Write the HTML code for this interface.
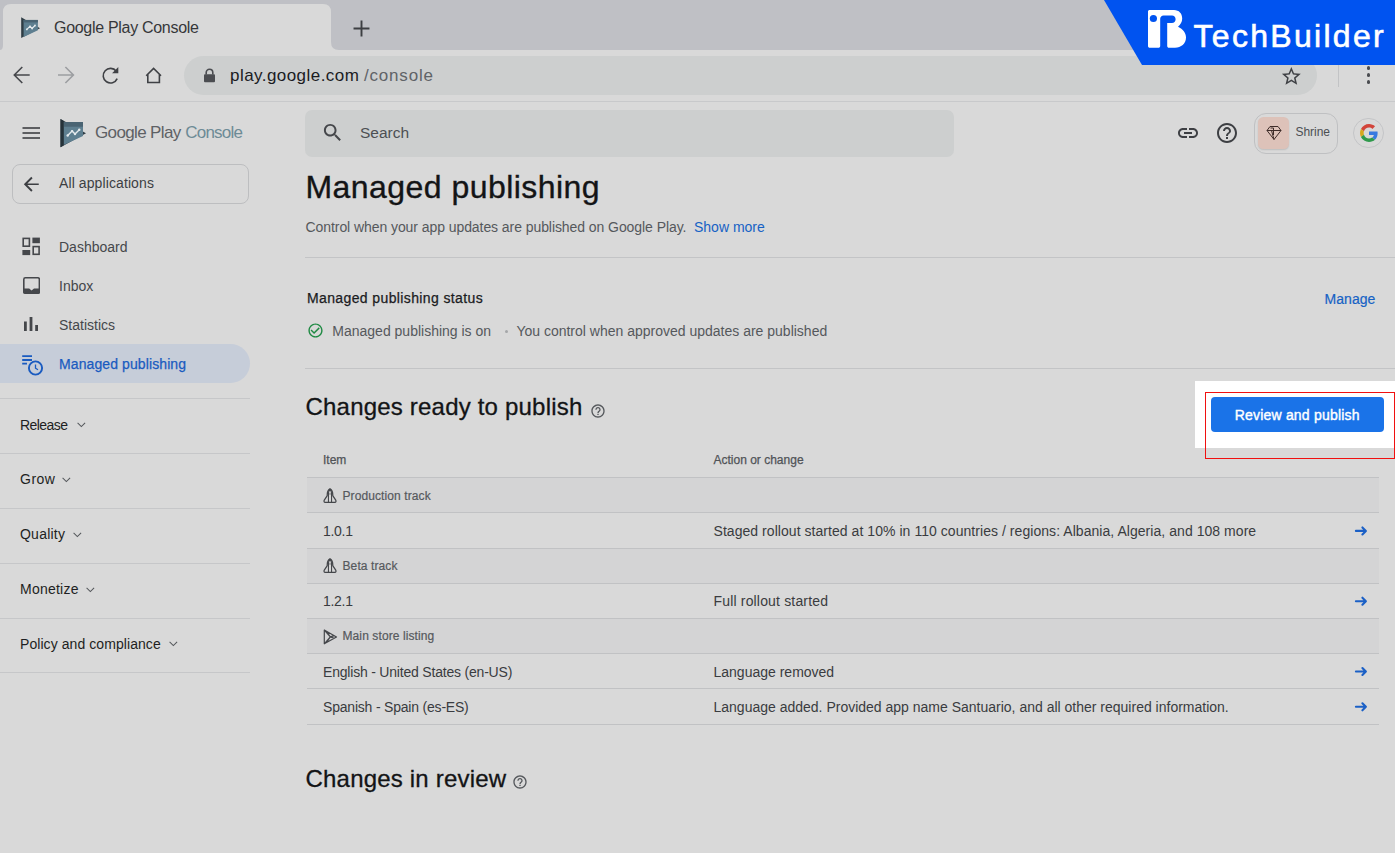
<!DOCTYPE html>
<html><head><meta charset="utf-8"><title>Managed publishing</title>
<style>
html,body{margin:0;padding:0;}
body{width:1395px;height:853px;position:relative;overflow:hidden;background:#d9d9d9;font-family:"Liberation Sans",sans-serif;}
.t{position:absolute;white-space:nowrap;line-height:1;}
.r{position:absolute;}
</style></head><body>
<div class="r" style="left:0px;top:0px;width:1395px;height:50px;background:#bfc0c5;"></div>
<svg class="r" style="left:0;top:0" width="360" height="52" viewBox="0 0 360 52"><path d="M0 50 Q3 50 3 45 L3 12 Q3 4 11 4 L323 4 Q331 4 331 12 L331 42 Q331 50 339 50 L0 50 Z" fill="#d9d9d9"/></svg>
<div class="r" style="left:0px;top:50px;width:1395px;height:51px;background:#d9d9d9;"></div>
<svg class="r" style="left:0;top:0" width="100" height="160" viewBox="0 0 100 160"><path d="M21.2 17.3 L21.2 38 L40 28.2 Z" fill="#2f3d45"/><path d="M23.6 19.9 H37.9 V30.2 L23.6 37 Z" fill="#5e7f90"/><path d="M23.6 19.9 H37.9 V22.4 H23.6 Z" fill="#4a6473"/><polyline points="26.8,29.4 30,26.4 32.1,28.5 35,25.5" fill="none" stroke="#e4eaed" stroke-width="1.2"/><circle cx="26.8" cy="29.4" r="0.9" fill="#e4eaed"/><circle cx="30" cy="26.4" r="0.9" fill="#e4eaed"/><circle cx="32.1" cy="28.5" r="0.9" fill="#e4eaed"/><circle cx="35" cy="25.5" r="0.9" fill="#e4eaed"/><path d="M60.5 119.1 L60.5 147.3 L86 133.2 Z" fill="#2f3d45"/><path d="M63.6 122 H83 V135.9 L63.6 145 Z" fill="#5e7f90"/><path d="M63.6 122 H83 V126.7 H63.6 Z" fill="#4a6473"/><path d="M60.5 119.1 L60.5 147.3 L63.6 145.6 L63.6 121 Z" fill="#26333a"/><polyline points="67.7,135.5 72.1,131.1 75,134 79.3,129.8" fill="none" stroke="#e4eaed" stroke-width="1.4"/><circle cx="67.7" cy="135.5" r="1.2" fill="#e4eaed"/><circle cx="72.1" cy="131.1" r="1.2" fill="#e4eaed"/><circle cx="75" cy="134" r="1.2" fill="#e4eaed"/><circle cx="79.3" cy="129.8" r="1.2" fill="#e4eaed"/></svg>
<div class="t" style="left:54px;top:20.06px;font-size:16px;color:#36373a;letter-spacing:-0.3px;">Google Play Console</div>
<svg class="r" style="left:353px;top:20px;" width="17" height="17" viewBox="0 0 16 16"><path d="M8 0.5 V15.5 M0.5 8 H15.5" stroke="#3d3f43" stroke-width="1.8"/></svg>
<svg class="r" style="left:0;top:0" width="180" height="100" viewBox="0 0 180 100"><path d="M29.7 75 H15 M22.3 67 L14.3 75 L22.3 83" fill="none" stroke="#45474b" stroke-width="1.6"/><path d="M58 75 H72.7 M65.4 67 L73.4 75 L65.4 83" fill="none" stroke="#9c9ea1" stroke-width="1.6"/><path d="M116.3 71.2 A7.3 7.3 0 1 0 117.2 78.6" fill="none" stroke="#3f4145" stroke-width="1.6"/><path d="M118.3 67 V73.2 H112.1 Z" fill="#3f4145"/><path d="M146.2 75.8 L153.6 68.4 L161 75.8 M147.8 74.5 V82.5 H159.4 V74.5" fill="none" stroke="#3f4145" stroke-width="1.6" stroke-linejoin="miter"/></svg>
<div class="r" style="left:184px;top:56px;width:1133px;height:39px;background:#cdcfcf;border-radius:19.5px;"></div>
<svg class="r" style="left:203px;top:68px;" width="13" height="15" viewBox="0 0 13 15"><path d="M3.2 6.5 V4.6 A3.3 3.3 0 0 1 9.8 4.6 V6.5" fill="none" stroke="#4b4d51" stroke-width="1.6"/><rect x="1" y="6.3" width="11" height="8" rx="1" fill="#4b4d51"/></svg>
<div class="t" style="left:230px;top:66.81px;font-size:17px;color:#1b1c1f;letter-spacing:0.45px;">play.google.com</div>
<div class="t" style="left:364px;top:66.81px;font-size:17px;color:#606367;letter-spacing:0.8px;">/console</div>
<svg class="r" style="left:1279.9px;top:65.1px;" width="22.7" height="22.7" viewBox="0 0 24 24"><path d="M22 9.24l-7.19-.62L12 2 9.19 8.63 2 9.24l5.46 4.73L5.82 21 12 17.27 18.18 21l-1.63-7.03L22 9.24zM12 15.4l-3.76 2.27 1-4.28-3.32-2.88 4.38-.38L12 6.1l1.71 4.04 4.38.38-3.32 2.88 1 4.28L12 15.4z" fill="#3f4145"/></svg>
<div class="r" style="left:1338px;top:65px;width:1px;height:22px;background:#c2c3c5;"></div>
<div class="r" style="left:1366.5px;top:66.3px;width:3.6px;height:3.6px;background:#4a4c50;border-radius:50%;"></div>
<div class="r" style="left:1366.5px;top:73.3px;width:3.6px;height:3.6px;background:#4a4c50;border-radius:50%;"></div>
<div class="r" style="left:1366.5px;top:80.3px;width:3.6px;height:3.6px;background:#4a4c50;border-radius:50%;"></div>
<div class="r" style="left:0px;top:101px;width:1395px;height:1px;background:#c8c9cb;"></div>
<svg class="r" style="left:21px;top:126px;" width="20" height="14" viewBox="0 0 20 14"><path d="M1.5 2.1 H19 M1.5 7 H19 M1.5 11.9 H19" stroke="#34363a" stroke-width="1.5"/></svg>
<div class="t" style="left:95px;top:123.91px;font-size:17px;color:#5e6165;letter-spacing:-0.64px;">Google Play</div>
<div class="t" style="left:185.2px;top:123.91px;font-size:17px;color:#6d8b96;letter-spacing:-0.75px;">Console</div>
<div class="r" style="left:12px;top:164.4px;width:235px;height:37.4px;background:transparent;border:1px solid #bdbec0;border-radius:8px;"></div>
<svg class="r" style="left:20px;top:173.1px;" width="22.5" height="22.5" viewBox="0 0 24 24"><path d="M20 11.1H7.83l5.59-5.59L12 4.1l-7.9 7.9 7.9 7.9 1.41-1.41L7.83 12.9H20v-1.8z" fill="#3d3f43"/></svg>
<div class="t" style="left:59px;top:175.95px;font-size:14px;color:#3d3f43;letter-spacing:0.1px;">All applications</div>
<svg class="r" style="left:22px;top:237px;" width="18" height="19" viewBox="0 0 18 19"><rect x="1.2" y="1.4" width="6.2" height="7.8" fill="none" stroke="#45474b" stroke-width="1.6"/><rect x="10.4" y="0.6" width="7.5" height="5.6" fill="#45474b"/><rect x="0.4" y="13" width="7.8" height="5.1" fill="#45474b"/><rect x="11.2" y="9.6" width="5.9" height="7.7" fill="none" stroke="#45474b" stroke-width="1.6"/></svg>
<div class="t" style="left:59px;top:239.65px;font-size:14px;color:#45474b;">Dashboard</div>
<svg class="r" style="left:22.8px;top:277.1px;" width="17.2" height="17" viewBox="0 0 17.2 17"><rect x="0.8" y="0.8" width="15.6" height="15.2" rx="1.6" fill="none" stroke="#45474b" stroke-width="1.6"/><path d="M0 11.4 H6.2 L8.6 13.4 L11 11.4 H17.2 V15 A2 2 0 0 1 15.2 17 H2 A2 2 0 0 1 0 15 Z" fill="#45474b"/></svg>
<div class="t" style="left:59px;top:278.95px;font-size:14px;color:#45474b;">Inbox</div>
<svg class="r" style="left:24px;top:317.2px;" width="14" height="14" viewBox="0 0 14 14"><rect x="0" y="4.5" width="2.8" height="9.5" fill="#45474b"/><rect x="5.6" y="0" width="2.8" height="14" fill="#45474b"/><rect x="11.2" y="8" width="2.8" height="6" fill="#45474b"/></svg>
<div class="t" style="left:59px;top:317.65px;font-size:14px;color:#45474b;">Statistics</div>
<div class="r" style="left:0px;top:344.2px;width:250px;height:39.2px;background:#c6cdd9;border-radius:0 19.6px 19.6px 0;"></div>
<svg class="r" style="left:22px;top:355px;" width="22" height="21" viewBox="0 0 22 21"><path d="M0.2 1.2 H10 M0.2 5 H10 M0.2 8.7 H5" stroke="#1a5bc0" stroke-width="1.8"/><circle cx="13.5" cy="13" r="6.6" fill="none" stroke="#1a5bc0" stroke-width="1.9"/><path d="M13.5 9.5 V13.2 L16 14.8" fill="none" stroke="#1a5bc0" stroke-width="1.3"/></svg>
<div class="t" style="left:59px;top:357.35px;font-size:14px;color:#1a5bc0;letter-spacing:0.1px;-webkit-text-stroke:0.25px #1a5bc0;">Managed publishing</div>
<div class="r" style="left:0px;top:398px;width:250px;height:1px;background:#c6c7c9;"></div>
<div class="r" style="left:0px;top:453px;width:250px;height:1px;background:#c6c7c9;"></div>
<div class="r" style="left:0px;top:508px;width:250px;height:1px;background:#c6c7c9;"></div>
<div class="r" style="left:0px;top:563px;width:250px;height:1px;background:#c6c7c9;"></div>
<div class="r" style="left:0px;top:618px;width:250px;height:1px;background:#c6c7c9;"></div>
<div class="r" style="left:0px;top:672px;width:250px;height:1px;background:#c6c7c9;"></div>
<div class="t" style="left:20px;top:417.55px;font-size:14px;color:#1e1f22;letter-spacing:-0.55px;">Release</div>
<div class="t" style="left:20px;top:472.30px;font-size:14px;color:#1e1f22;letter-spacing:0.5px;">Grow</div>
<div class="t" style="left:20px;top:527.05px;font-size:14px;color:#1e1f22;letter-spacing:0.23px;">Quality</div>
<div class="t" style="left:20px;top:581.80px;font-size:14px;color:#1e1f22;letter-spacing:0.24px;">Monetize</div>
<div class="t" style="left:20px;top:636.55px;font-size:14px;color:#1e1f22;letter-spacing:0.07px;">Policy and compliance</div>
<svg class="r" style="left:76.6px;top:422.30px" width="9" height="6" viewBox="0 0 9 6"><path d="M0.6 0.8 L4.35 4.5 L8.1 0.8" fill="none" stroke="#55585c" stroke-width="1.05"/></svg>
<svg class="r" style="left:62px;top:477.05px" width="9" height="6" viewBox="0 0 9 6"><path d="M0.6 0.8 L4.35 4.5 L8.1 0.8" fill="none" stroke="#55585c" stroke-width="1.05"/></svg>
<svg class="r" style="left:73.3px;top:531.80px" width="9" height="6" viewBox="0 0 9 6"><path d="M0.6 0.8 L4.35 4.5 L8.1 0.8" fill="none" stroke="#55585c" stroke-width="1.05"/></svg>
<svg class="r" style="left:86.3px;top:586.55px" width="9" height="6" viewBox="0 0 9 6"><path d="M0.6 0.8 L4.35 4.5 L8.1 0.8" fill="none" stroke="#55585c" stroke-width="1.05"/></svg>
<svg class="r" style="left:168.9px;top:641.30px" width="9" height="6" viewBox="0 0 9 6"><path d="M0.6 0.8 L4.35 4.5 L8.1 0.8" fill="none" stroke="#55585c" stroke-width="1.05"/></svg>

<div class="r" style="left:305px;top:110px;width:649px;height:46.5px;background:#cdcfcf;border-radius:7px;"></div>
<svg class="r" style="left:320.5px;top:121px;" width="23.3" height="23.3" viewBox="0 0 24 24"><path d="M15.5 14h-.79l-.28-.27C15.41 12.59 16 11.11 16 9.5 16 5.91 13.09 3 9.5 3S3 5.91 3 9.5 5.91 16 9.5 16c1.61 0 3.09-.59 4.23-1.57l.27.28v.79l5 4.99L20.49 19l-4.99-5zm-6 0C7.01 14 5 11.99 5 9.5S7.01 5 9.5 5 14 7.01 14 9.5 11.99 14 9.5 14z" fill="#45474b"/></svg>
<div class="t" style="left:360px;top:124.68px;font-size:15.5px;color:#4c4f53;">Search</div>
<svg class="r" style="left:1176px;top:121px;" width="24" height="24" viewBox="0 0 24 24"><path d="M3.9 12c0-1.71 1.39-3.1 3.1-3.1h4V7H7c-2.76 0-5 2.24-5 5s2.24 5 5 5h4v-1.9H7c-1.71 0-3.1-1.39-3.1-3.1zM8 13h8v-2H8v2zm9-6h-4v1.9h4c1.71 0 3.1 1.39 3.1 3.1s-1.39 3.1-3.1 3.1h-4V17h4c2.76 0 5-2.24 5-5s-2.24-5-5-5z" fill="#3d3f43"/></svg>
<svg class="r" style="left:1215px;top:121px;" width="24" height="24" viewBox="0 0 24 24"><path d="M11 18h2v-2h-2v2zm1-16C6.48 2 2 6.48 2 12s4.48 10 10 10 10-4.48 10-10S17.52 2 12 2zm0 18c-4.41 0-8-3.59-8-8s3.59-8 8-8 8 3.59 8 8-3.59 8-8 8zm0-14c-2.21 0-4 1.79-4 4h2c0-1.1.9-2 2-2s2 .9 2 2c0 2-3 1.75-3 5h2c0-2.25 3-2.5 3-5 0-2.21-1.79-4-4-4z" fill="#3d3f43"/></svg>
<div class="r" style="left:1254px;top:113px;width:82.2px;height:38.8px;background:transparent;border:1px solid #bfc0c2;border-radius:12px;"></div>
<div class="r" style="left:1258.3px;top:117.3px;width:31.2px;height:31.6px;background:#ddc2b9;border-radius:5.5px;box-shadow:0 1px 1.5px rgba(0,0,0,0.12);"></div>
<svg class="r" style="left:1266px;top:125px;" width="16" height="16" viewBox="0 0 16 16"><path d="M4 1.5 H12 L15 5.5 L8 14.5 L1 5.5 Z M1 5.5 H15 M5.5 5.5 L8 14.5 M4.5 3 L7.5 3 L7.5 10" fill="none" stroke="#3e2c29" stroke-width="1.0" stroke-linejoin="round"/></svg>
<div class="t" style="left:1295.5px;top:126.14px;font-size:12px;color:#4c4f53;letter-spacing:-0.05px;">Shrine</div>
<div class="r" style="left:1353.2px;top:117.6px;width:30.8px;height:30.8px;background:transparent;border:1px solid #c4c5c7;border-radius:50%;box-sizing:border-box;"></div>
<svg class="r" style="left:1359.5px;top:124px;" width="18" height="18" viewBox="0 0 48 48"><path fill="#d2443a" d="M24 9.5c3.54 0 6.71 1.22 9.21 3.6l6.85-6.85C35.9 2.38 30.47 0 24 0 14.62 0 6.51 5.38 2.56 13.22l7.98 6.19C12.43 13.72 17.74 9.5 24 9.5z"/><path fill="#3a7ae0" d="M46.98 24.55c0-1.57-.15-3.09-.38-4.55H24v9.02h12.94c-.58 2.96-2.26 5.48-4.78 7.18l7.73 6c4.51-4.18 7.09-10.36 7.09-17.65z"/><path fill="#d7a81f" d="M10.53 28.59c-.48-1.45-.76-2.99-.76-4.59s.27-3.14.76-4.59l-7.98-6.19C.92 16.46 0 20.12 0 24c0 3.88.92 7.54 2.56 10.78l7.97-6.19z"/><path fill="#2f9a4c" d="M24 48c6.48 0 11.93-2.13 15.89-5.81l-7.73-6c-2.15 1.45-4.92 2.3-8.16 2.3-6.26 0-11.57-4.22-13.47-9.91l-7.98 6.19C6.51 42.62 14.62 48 24 48z"/></svg>
<div class="t" style="left:305.5px;top:171.41px;font-size:32px;color:#131416;letter-spacing:0.45px;-webkit-text-stroke:0.35px #131416;">Managed publishing</div>
<div class="t" style="left:305.5px;top:220.35px;font-size:14px;color:#55585c;letter-spacing:-0.07px;">Control when your app updates are published on Google Play.</div>
<div class="t" style="left:694px;top:220.35px;font-size:14px;color:#1662c5;">Show more</div>
<div class="r" style="left:305px;top:257px;width:1090px;height:1px;background:#c3c4c6;"></div>
<div class="t" style="left:307px;top:290.55px;font-size:14px;color:#1b1c1f;letter-spacing:0.38px;-webkit-text-stroke:0.25px #1b1c1f;">Managed publishing status</div>
<svg class="r" style="left:307px;top:322px;" width="17" height="17" viewBox="0 0 24 24"><path d="M16.59 7.58L10 14.17l-3.59-3.58L5 12l5 5 8-8zM12 2C6.48 2 2 6.48 2 12s4.48 10 10 10 10-4.48 10-10S17.52 2 12 2zm0 18c-4.42 0-8-3.58-8-8s3.58-8 8-8 8 3.58 8 8-3.58 8-8 8z" fill="#1f8a43"/></svg>
<div class="t" style="left:332.3px;top:323.65px;font-size:14px;color:#55585c;">Managed publishing is on</div>
<div class="r" style="left:504.7px;top:329.5px;width:3px;height:3px;background:#a5a7a9;border-radius:50%;"></div>
<div class="t" style="left:516.4px;top:323.65px;font-size:14px;color:#55585c;">You control when approved updates are published</div>
<div class="t" style="left:1324.5px;top:292.45px;font-size:14px;color:#1662c5;letter-spacing:0.05px;-webkit-text-stroke:0.2px #1662c5;">Manage</div>
<div class="r" style="left:305px;top:368px;width:1090px;height:1px;background:#c3c4c6;"></div>
<div class="t" style="left:305.5px;top:394.88px;font-size:24px;color:#131416;letter-spacing:0.2px;-webkit-text-stroke:0.3px #131416;">Changes ready to publish</div>
<svg class="r" style="left:590px;top:403px;" width="16" height="16" viewBox="0 0 24 24"><path d="M11 18h2v-2h-2v2zm1-16C6.48 2 2 6.48 2 12s4.48 10 10 10 10-4.48 10-10S17.52 2 12 2zm0 18c-4.41 0-8-3.59-8-8s3.59-8 8-8 8 3.59 8 8-3.59 8-8 8zm0-14c-2.21 0-4 1.79-4 4h2c0-1.1.9-2 2-2s2 .9 2 2c0 2-3 1.75-3 5h2c0-2.25 3-2.5 3-5 0-2.21-1.79-4-4-4z" fill="#55585c"/></svg>
<div class="t" style="left:323px;top:454.34px;font-size:12px;color:#505357;-webkit-text-stroke:0.25px #505357;">Item</div>
<div class="t" style="left:713.5px;top:454.34px;font-size:12px;color:#505357;-webkit-text-stroke:0.25px #505357;">Action or change</div>
<div class="r" style="left:307px;top:477.5px;width:1071.5px;height:35.200000000000045px;background:#d4d4d5;"></div>
<div class="r" style="left:307px;top:548px;width:1071.5px;height:35.10000000000002px;background:#d4d4d5;"></div>
<div class="r" style="left:307px;top:618.2px;width:1071.5px;height:35.19999999999993px;background:#d4d4d5;"></div>
<div class="r" style="left:307px;top:477.0px;width:1071.5px;height:1px;background:#c1c2c4;"></div>
<div class="r" style="left:307px;top:512.2px;width:1071.5px;height:1px;background:#c1c2c4;"></div>
<div class="r" style="left:307px;top:547.5px;width:1071.5px;height:1px;background:#c1c2c4;"></div>
<div class="r" style="left:307px;top:582.6px;width:1071.5px;height:1px;background:#c1c2c4;"></div>
<div class="r" style="left:307px;top:617.7px;width:1071.5px;height:1px;background:#c1c2c4;"></div>
<div class="r" style="left:307px;top:652.9px;width:1071.5px;height:1px;background:#c1c2c4;"></div>
<div class="r" style="left:307px;top:688.2px;width:1071.5px;height:1px;background:#c1c2c4;"></div>
<div class="r" style="left:307px;top:723.6px;width:1071.5px;height:1px;background:#c1c2c4;"></div>
<svg class="r" style="left:322.5px;top:488px;" width="14" height="15" viewBox="0 0 13.5 15"><path d="M6.75 0.7 C5 1.8 4 3.8 4 6.4 V7.6 L1.2 11.8 C0.6 12.8 0.6 14.3 1.6 14.3 H11.9 C12.9 14.3 12.9 12.8 12.3 11.8 L9.5 7.6 V6.4 C9.5 3.8 8.5 1.8 6.75 0.7 Z" fill="none" stroke="#45474b" stroke-width="1.25" stroke-linejoin="round"/><path d="M5.2 14.3 V5.2 C5.2 3.6 5.8 2.6 6.75 2.1 C7.7 2.6 8.3 3.6 8.3 5.2 V14.3" fill="none" stroke="#45474b" stroke-width="1.1"/><circle cx="6.75" cy="5.9" r="0.7" fill="#45474b"/></svg>
<div class="t" style="left:342.5px;top:489.64px;font-size:12px;color:#56595d;letter-spacing:0.1px;-webkit-text-stroke:0.2px #56595d;">Production track</div>
<div class="t" style="left:323px;top:524.05px;font-size:14px;color:#3a3c40;letter-spacing:-0.3px;">1.0.1</div>
<div class="t" style="left:713.5px;top:524.05px;font-size:14px;color:#3a3c40;letter-spacing:0.05px;">Staged rollout started at 10% in 110 countries / regions: Albania, Algeria, and 108 more</div>
<svg class="r" style="left:322.5px;top:558.3px;" width="14" height="15" viewBox="0 0 13.5 15"><path d="M6.75 0.7 C5 1.8 4 3.8 4 6.4 V7.6 L1.2 11.8 C0.6 12.8 0.6 14.3 1.6 14.3 H11.9 C12.9 14.3 12.9 12.8 12.3 11.8 L9.5 7.6 V6.4 C9.5 3.8 8.5 1.8 6.75 0.7 Z" fill="none" stroke="#45474b" stroke-width="1.25" stroke-linejoin="round"/><path d="M5.2 14.3 V5.2 C5.2 3.6 5.8 2.6 6.75 2.1 C7.7 2.6 8.3 3.6 8.3 5.2 V14.3" fill="none" stroke="#45474b" stroke-width="1.1"/><circle cx="6.75" cy="5.9" r="0.7" fill="#45474b"/></svg>
<div class="t" style="left:342.5px;top:560.04px;font-size:12px;color:#56595d;letter-spacing:0.1px;-webkit-text-stroke:0.2px #56595d;">Beta track</div>
<div class="t" style="left:323px;top:594.45px;font-size:14px;color:#3a3c40;letter-spacing:-0.3px;">1.2.1</div>
<div class="t" style="left:713.5px;top:594.45px;font-size:14px;color:#3a3c40;letter-spacing:0.17px;">Full rollout started</div>
<svg class="r" style="left:322.5px;top:628.5px;" width="15" height="16" viewBox="0 0 15 16"><path d="M1.3 1 L13.5 7.9 L1.3 14.8 Z M1.3 1 L7.3 7.9 L1.3 14.8 M3.5 2.3 L7.3 7.9 L11.2 6.6 M3.5 13.5 L7.3 7.9 L11.2 9.2" fill="none" stroke="#45474b" stroke-width="1.2" stroke-linejoin="round"/></svg>
<div class="t" style="left:342.5px;top:630.44px;font-size:12px;color:#56595d;letter-spacing:0.1px;-webkit-text-stroke:0.2px #56595d;">Main store listing</div>
<div class="t" style="left:323px;top:664.95px;font-size:14px;color:#3a3c40;letter-spacing:-0.2px;">English - United States (en-US)</div>
<div class="t" style="left:713.5px;top:664.95px;font-size:14px;color:#3a3c40;">Language removed</div>
<div class="t" style="left:323px;top:700.25px;font-size:14px;color:#3a3c40;letter-spacing:-0.2px;">Spanish - Spain (es-ES)</div>
<div class="t" style="left:713.5px;top:700.25px;font-size:14px;color:#3a3c40;">Language added. Provided app name Santuario, and all other required information.</div>
<svg class="r" style="left:0;top:0" width="1395" height="853" viewBox="0 0 1395 853"><path d="M1355.9 530.9 H1365.3 M1362.4 527.4 L1365.9 530.9 L1362.4 534.4" fill="none" stroke="#1b60c6" stroke-width="2.1" stroke-linecap="round" stroke-linejoin="round"/><path d="M1355.9 601.2 H1365.3 M1362.4 597.7 L1365.9 601.2 L1362.4 604.7" fill="none" stroke="#1b60c6" stroke-width="2.1" stroke-linecap="round" stroke-linejoin="round"/><path d="M1355.9 671.5 H1365.3 M1362.4 668.0 L1365.9 671.5 L1362.4 675.0" fill="none" stroke="#1b60c6" stroke-width="2.1" stroke-linecap="round" stroke-linejoin="round"/><path d="M1355.9 706.8 H1365.3 M1362.4 703.3 L1365.9 706.8 L1362.4 710.3" fill="none" stroke="#1b60c6" stroke-width="2.1" stroke-linecap="round" stroke-linejoin="round"/></svg>
<div class="t" style="left:305.5px;top:767.18px;font-size:24px;color:#131416;letter-spacing:0.2px;-webkit-text-stroke:0.3px #131416;">Changes in review</div>
<svg class="r" style="left:512px;top:774px;" width="16" height="16" viewBox="0 0 24 24"><path d="M11 18h2v-2h-2v2zm1-16C6.48 2 2 6.48 2 12s4.48 10 10 10 10-4.48 10-10S17.52 2 12 2zm0 18c-4.41 0-8-3.59-8-8s3.59-8 8-8 8 3.59 8 8-3.59 8-8 8zm0-14c-2.21 0-4 1.79-4 4h2c0-1.1.9-2 2-2s2 .9 2 2c0 2-3 1.75-3 5h2c0-2.25 3-2.5 3-5 0-2.21-1.79-4-4-4z" fill="#55585c"/></svg>
<div class="r" style="left:1195px;top:381px;width:200px;height:67px;background:#ffffff;"></div>
<div class="r" style="left:1210.5px;top:397px;width:173.5px;height:35px;background:#1a73e8;border-radius:4px;"></div>
<div class="t" style="left:1234.7px;top:407.65px;font-size:14px;color:#ffffff;letter-spacing:0.2px;-webkit-text-stroke:0.4px #fff;">Review and publish</div>
<div class="r" style="left:1205px;top:392px;width:190px;height:67px;background:transparent;border:1.6px solid #f01010;box-sizing:border-box;"></div>
<svg class="r" style="left:0;top:0" width="1395" height="66" viewBox="0 0 1395 66"><path d="M1104 0 H1395 V65 H1142 Z" fill="#0053f0"/><path fill="#fff" fill-rule="evenodd" d="M1149.5 10 H1174 C1179 10 1182.2 13.5 1182.2 18.5 C1182.2 22 1180.5 24.5 1178 26.8 C1183 29 1186 33 1186 37.5 C1186 43.5 1181 47.8 1175 47.8 H1169 C1168 47.8 1167.2 47 1167.2 46 V23 H1172 C1174 23 1175.6 21.3 1175.6 19.2 C1175.6 17.1 1174 15.4 1172 15.4 H1163.5 C1161.7 15.4 1160.2 16.9 1160.2 18.7 V46 C1160.2 47 1159.4 47.8 1158.4 47.8 H1149.8 C1148.8 47.8 1148 47 1148 46 V11.5 C1148 10.7 1148.7 10 1149.5 10 Z"/><circle cx="1153.4" cy="18.5" r="3.6" fill="#0053f0"/><text x="1193.5" y="47.1" font-family="Liberation Sans" font-size="32" fill="#fff" stroke="#fff" stroke-width="0.6" letter-spacing="2.3">TechBuilder</text></svg>
</body></html>
